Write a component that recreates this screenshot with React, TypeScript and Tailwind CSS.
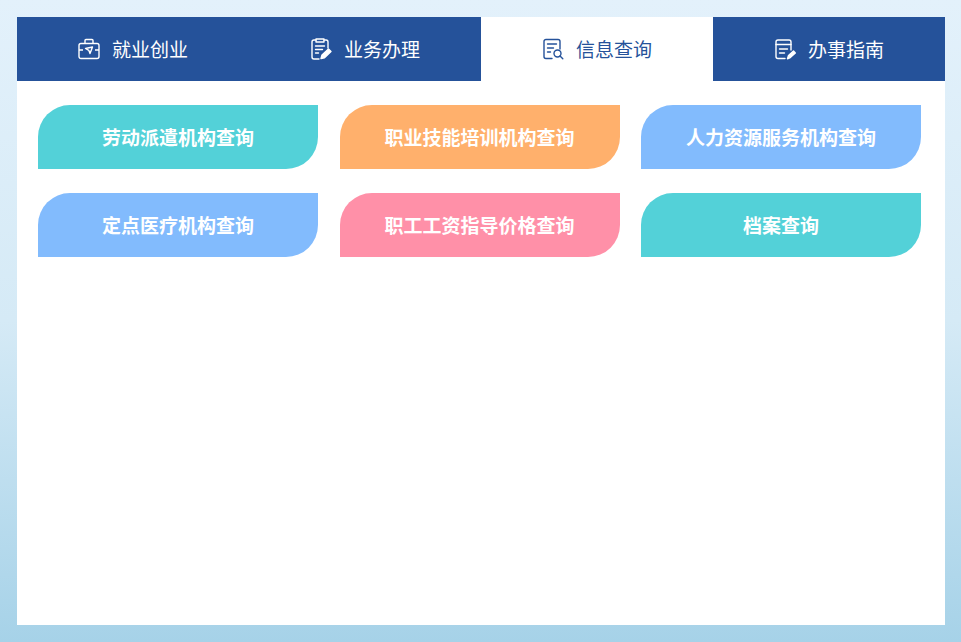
const font = { fontFamily: '"Noto Sans CJK SC", "Liberation Sans", sans-serif' }

function BriefcaseIcon() {
  return (
    <svg className="h-[22px] w-[22px]" fill="none" viewBox="0 0 22 22" stroke="currentColor" strokeWidth={1.4} strokeLinejoin="round">
      <rect x="1" y="5.5" width="20" height="15" rx="2" />
      <path d="M7 5.5V2.5a1 1 0 011-1h6a1 1 0 011 1v3" />
      <path d="M1 12h4M17 12h4" />
      <path d="M7.5 10.5l7-1.5-2.5 6.5-1.2-3.2z" />
    </svg>
  )
}

function ClipboardIcon() {
  return (
    <svg className="h-[22px] w-[22px]" fill="none" viewBox="0 0 22 22" stroke="currentColor" strokeWidth={1.4} strokeLinejoin="round" strokeLinecap="round">
      <path d="M9 21H4a2 2 0 01-2-2V4a2 2 0 012-2h2M14 2h2a2 2 0 012 2v6" />
      <path d="M6 1h8v3H6z" />
      <path d="M5.5 8h9M5.5 11.5h7M5.5 15h3" />
      <path d="M11 20.5l1-3.5 6.5-6 2.5 2.5-6.5 6.2z" fill="currentColor" />
    </svg>
  )
}

function SearchDocIcon() {
  return (
    <svg className="h-[22px] w-[22px]" fill="none" viewBox="0 0 22 22" stroke="currentColor" strokeWidth={1.4} strokeLinejoin="round" strokeLinecap="round">
      <path d="M10 20.5H4a2 2 0 01-2-2v-15a2 2 0 012-2h12a2 2 0 012 2v7.5" />
      <path d="M5.5 6h9M5.5 10h6M5.5 14h3" />
      <circle cx="15.5" cy="15.5" r="3.5" />
      <path d="M18 18l2.8 2.8" />
    </svg>
  )
}

function NotePenIcon() {
  return (
    <svg className="h-[22px] w-[22px]" fill="none" viewBox="0 0 22 22" stroke="currentColor" strokeWidth={1.4} strokeLinejoin="round" strokeLinecap="round">
      <path d="M11 20.5H4a2 2 0 01-2-2V4a2 2 0 012-2h11a2 2 0 012 2v8" />
      <path d="M2 6.5h15M5.5 11h8M5.5 15h5" />
      <path d="M13.5 20.8l1-3.3 5-4.5 1.8 2-5 4.6z" fill="currentColor" />
    </svg>
  )
}

const tabs = [
  { label: '就业创业', icon: <BriefcaseIcon /> },
  { label: '业务办理', icon: <ClipboardIcon /> },
  { label: '信息查询', icon: <SearchDocIcon />, active: true },
  { label: '办事指南', icon: <NotePenIcon /> },
]

const links = [
  { label: '劳动派遣机构查询', color: 'bg-[#53d1d8]' },
  { label: '职业技能培训机构查询', color: 'bg-[#ffb06c]' },
  { label: '人力资源服务机构查询', color: 'bg-[#82bbfd]' },
  { label: '定点医疗机构查询', color: 'bg-[#82bbfd]' },
  { label: '职工工资指导价格查询', color: 'bg-[#ff90a8]' },
  { label: '档案查询', color: 'bg-[#53d1d8]' },
]

export default function App() {
  return (
    <div
      className="flex h-[642px] w-[961px] overflow-hidden bg-gradient-to-b from-[#e3f1fb] via-[#d5eaf6] to-[#a6d2e8] pt-[17px] pb-[17px] pl-[17px] pr-[16px]"
      style={font}
    >
      <div className="flex w-full flex-col bg-white">
        <div className="flex h-16 bg-[#25529a]">
          {tabs.map((t) => (
            <div
              key={t.label}
              className={`flex w-[232px] items-center justify-center gap-[12px] text-[19px] ${t.active ? 'bg-white text-[#25529a]' : 'text-white'}`}
            >
              {t.icon}
              <span>{t.label}</span>
            </div>
          ))}
        </div>
        <div className="grid grid-cols-[280px_280px_280px] gap-x-[21.5px] gap-y-6 pt-6 pl-[21px]">
          {links.map((l) => (
            <div
              key={l.label}
              className={`flex h-16 items-center justify-center rounded-tl-[32px] rounded-br-[32px] text-[19px] font-bold text-white ${l.color}`}
            >
              {l.label}
            </div>
          ))}
        </div>
      </div>
    </div>
  )
}
